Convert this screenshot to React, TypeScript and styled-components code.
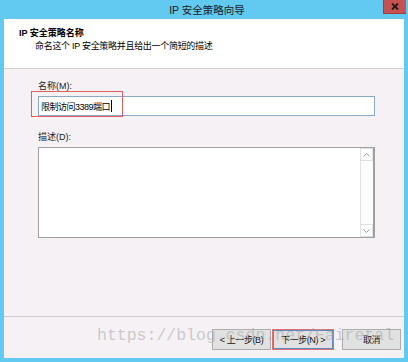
import styled, { createGlobalStyle } from 'styled-components';

const GlobalStyle = createGlobalStyle`
  html, body {
    margin: 0;
    padding: 0;
    background: #ffffff;
  }
  body {
    font-family: "Liberation Sans", "Noto Sans CJK SC", sans-serif;
    font-size: 9px;
    color: #000;
  }
`;

const Window = styled.div`
  width: 408px;
  height: 362px;
  display: flex;
  flex-direction: column;
  background: #62c9f0;
  box-sizing: border-box;
  padding: 0 4px 4px 4px;
  position: relative;
  overflow: hidden;
`;

const TitleBar = styled.div`
  height: 19px;
  display: flex;
  align-items: center;
  justify-content: center;
  position: relative;
  font-size: 10.5px;
  color: #1b1b1b;
  padding-left: 6px;
`;

const CloseButton = styled.div`
  position: absolute;
  right: -2px;
  top: 0;
  width: 22px;
  height: 13px;
  background: #c75050;
  display: flex;
  align-items: center;
  justify-content: center;
  border-left: 1px solid #a03c3c;
  border-bottom: 1px solid #a03c3c;
`;

const Client = styled.div`
  flex: 1;
  display: flex;
  flex-direction: column;
  background: #f5f1f5;
  position: relative;
`;

const Header = styled.div`
  height: 50px;
  background: #ffffff;
  border-bottom: 1px solid #cfcfcf;
  box-sizing: border-box;
  padding: 8px 0 0 15px;
`;

const HeaderTitle = styled.div`
  font-weight: bold;
  font-size: 9px;
  line-height: 13px;
`;

const HeaderSub = styled.div`
  padding-left: 16px;
  font-size: 9px;
  line-height: 13px;
  letter-spacing: -0.3px;
`;

const Body = styled.div`
  flex: 1;
  padding: 11px 29px 0 34px;
  display: flex;
  flex-direction: column;
`;

const Label = styled.div`
  font-size: 9px;
  line-height: 13px;
  margin-bottom: 3px;
  color: #222;
`;

const Field = styled.div`
  position: relative;
  height: 20px;
  border: 1px solid #8aa8c8;
  background: #fff;
  box-sizing: border-box;
  display: flex;
  align-items: center;
  padding-left: 2px;
  margin-bottom: 15px;
  font-size: 9px;
  letter-spacing: -0.5px;
`;

const Caret = styled.span`
  display: inline-block;
  width: 1px;
  height: 12px;
  background: #000;
  margin-left: 1px;
`;

const Highlight = styled.div`
  position: absolute;
  left: -8px;
  top: -6px;
  width: 92px;
  height: 26px;
  border: 1px solid #e06060;
  box-sizing: border-box;
`;

const TextArea = styled.div`
  height: 91px;
  border: 1px solid #a0a0a0;
  border-right-width: 2px;
  background: #fff;
  box-sizing: border-box;
  display: flex;
  justify-content: flex-end;
`;

const ScrollBar = styled.div`
  width: 12px;
  border-left: 1px solid #e2e2e2;
  display: flex;
  flex-direction: column;
  justify-content: space-between;
  background: #fcfcfc;
`;

const ScrollArrow = styled.div`
  height: 11px;
  border: 1px solid #e0e0e0;
  border-left: none;
  display: flex;
  align-items: center;
  justify-content: center;
  background: #fff;
`;

const Footer = styled.div`
  height: 42px;
  border-top: 1px solid #cdcdcd;
  box-sizing: border-box;
  display: flex;
  justify-content: flex-end;
  align-items: flex-start;
  padding: 12px 3px 0 0;
  gap: 1px;
  position: relative;
`;

const Button = styled.div<{ $primary?: boolean; $gap?: number }>`
  width: ${(p) => (p.$primary ? 62 : 59)}px;
  height: 21px;
  box-sizing: border-box;
  border: 1px solid ${(p) => (p.$primary ? '#e07070' : '#adadad')};
  background: #e1e1e1;
  display: flex;
  align-items: center;
  justify-content: center;
  font-size: 9px;
  letter-spacing: -0.4px;
  white-space: nowrap;
  color: #111;
  margin-left: ${(p) => p.$gap ?? 0}px;
  box-shadow: ${(p) => (p.$primary ? 'inset 0 0 0 1px #5a88c0' : 'none')};
  position: relative;
  z-index: 1;
`;

const Watermark = styled.div`
  position: absolute;
  left: 93px;
  top: 9px;
  font-family: "Liberation Mono", monospace;
  font-size: 16.5px;
  color: rgba(160, 160, 160, 0.5);
  z-index: 2;
  pointer-events: none;
`;

const App = () => {
  return (
    <>
      <GlobalStyle />
      <Window>
        <TitleBar>
          IP 安全策略向导
          <CloseButton>
            <svg width="8" height="7" viewBox="0 0 8 7">
              <path d="M1 0.5 L7 6.5 M7 0.5 L1 6.5" stroke="#1a1a1a" strokeWidth="1.8" />
            </svg>
          </CloseButton>
        </TitleBar>
        <Client>
          <Header>
            <HeaderTitle>IP 安全策略名称</HeaderTitle>
            <HeaderSub>命名这个 IP 安全策略并且给出一个简短的描述</HeaderSub>
          </Header>
          <Body>
            <Label>名称(M):</Label>
            <Field>
              限制访问3389端口
              <Caret />
              <Highlight />
            </Field>
            <Label>描述(D):</Label>
            <TextArea>
              <ScrollBar>
                <ScrollArrow>
                  <svg width="7" height="4" viewBox="0 0 7 4">
                    <path d="M0.5 3.5 L3.5 0.5 L6.5 3.5" stroke="#9a9a9a" fill="none" />
                  </svg>
                </ScrollArrow>
                <ScrollArrow>
                  <svg width="7" height="4" viewBox="0 0 7 4">
                    <path d="M0.5 0.5 L3.5 3.5 L6.5 0.5" stroke="#9a9a9a" fill="none" />
                  </svg>
                </ScrollArrow>
              </ScrollBar>
            </TextArea>
          </Body>
          <Footer>
            <Button>&lt; 上一步(B)</Button>
            <Button $primary>下一步(N) &gt;</Button>
            <Button $gap={7}>取消</Button>
            <Watermark>https://blog.csdn.net/Fairetal</Watermark>
          </Footer>
        </Client>
      </Window>
    </>
  );
};

export default App;
